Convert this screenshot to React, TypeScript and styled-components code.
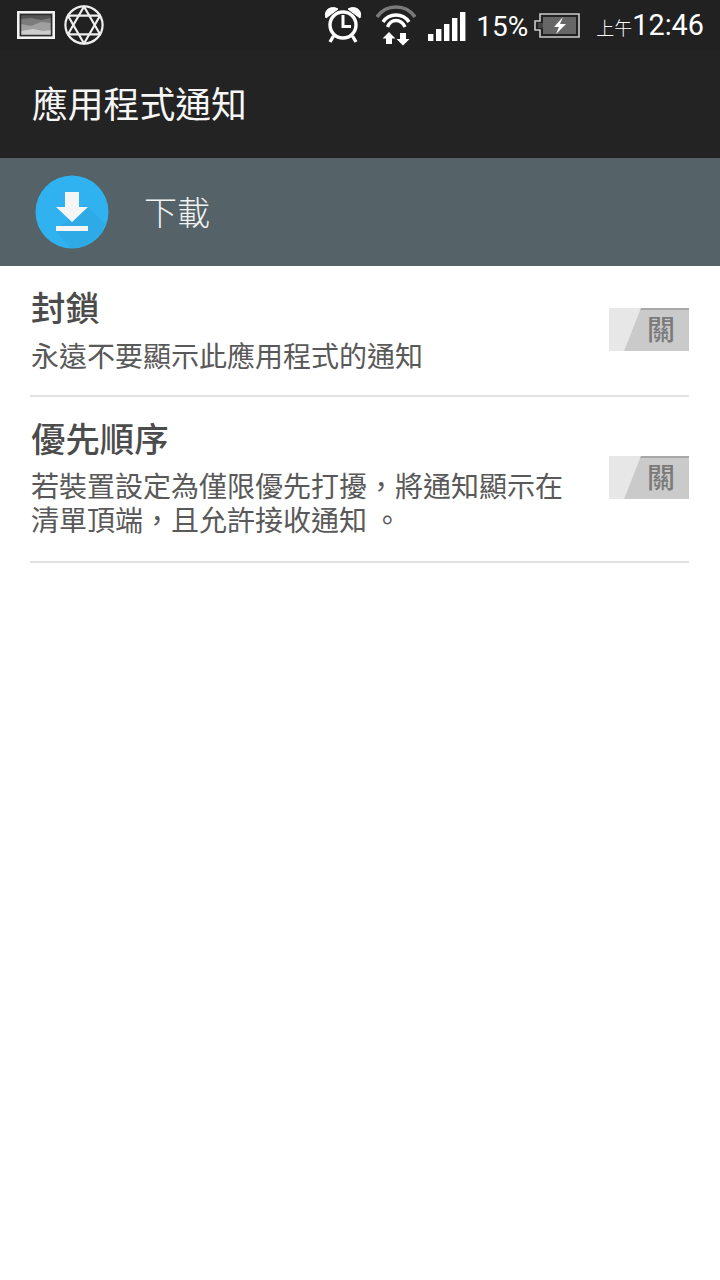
import React from 'react'
import styled, { createGlobalStyle } from 'styled-components'

const GlobalStyle = createGlobalStyle`
  html, body {
    margin: 0;
    padding: 0;
    background: #fff;
  }
  body {
    font-family: 'Noto Sans CJK TC', 'Noto Sans', sans-serif;
  }
`

const Page = styled.div`
  width: 720px;
  height: 1280px;
  overflow: hidden;
  background: #fff;
`

const StatusBar = styled.div`
  height: 50px;
  background: #212121;
  display: flex;
  align-items: center;
  padding: 0 16px 0 17px;
  box-sizing: border-box;
  color: #fff;
`

const StatusLeft = styled.div`
  display: flex;
  align-items: center;
  gap: 9px;
  flex: 1;
`

const StatusRight = styled.div`
  display: flex;
  align-items: center;
`

const Percent = styled.span`
  font-family: Roboto, sans-serif;
  font-size: 28px;
  font-weight: 400;
  margin: 2px 6px 0 10px;
`

const ClockPrefix = styled.span`
  font-size: 18px;
  font-weight: 300;
  margin: 4px 0 0 16px;
`

const Clock = styled.span`
  font-family: Roboto, sans-serif;
  font-size: 28.8px;
  font-weight: 400;
`

const AppBar = styled.div`
  height: 108px;
  background: #232323;
  display: flex;
  align-items: center;
  padding: 0 0 4px 32px;
  box-sizing: border-box;
  color: #f6f6f6;
  font-size: 35.8px;
  font-weight: 400;
`

const AppHeader = styled.div`
  height: 108px;
  background: #556368;
  display: flex;
  align-items: center;
  padding-left: 35px;
  gap: 35px;
  color: #f2f4f4;
  font-size: 33px;
  font-weight: 300;
`

const HeaderLabel = styled.span`
  margin-bottom: 2px;
`

const List = styled.div`
  padding: 0 31px 0 30px;
`

const Row = styled.div<{ $height: number }>`
  height: ${({ $height }) => $height}px;
  box-sizing: border-box;
  border-bottom: 2px solid #e2e2e2;
  display: flex;
  justify-content: space-between;
  align-items: flex-start;
`

const RowText = styled.div`
  width: 540px;
  padding: 16px 0 0 1px;
`

const RowTitle = styled.div`
  color: #4c4c4c;
  font-size: 34.4px;
  font-weight: 500;
  line-height: 48px;
`

const RowDesc = styled.div<{ $gap: number }>`
  color: #595959;
  font-size: 28px;
  line-height: 34px;
  margin-top: ${({ $gap }) => $gap}px;
`

const Toggle = styled.div<{ $top: number }>`
  position: relative;
  width: 80px;
  height: 43px;
  margin-top: ${({ $top }) => $top}px;
  padding: 0 14px 6px 0;
  box-sizing: border-box;
  background: #cacaca;
  border-top: 2px solid #a8a8a8;
  display: flex;
  align-items: center;
  justify-content: flex-end;
  color: #7a7a7a;
  font-size: 28px;
  font-weight: 500;

  &::before {
    content: '';
    position: absolute;
    inset: -2px auto 0 0;
    width: 32px;
    background: #e7e7e7;
    clip-path: polygon(0 0, 100% 0, 47% 100%, 0 100%);
  }
`

const PictureIcon = () => (
  <svg width="38" height="28" viewBox="0 0 38 28">
    <rect x="1" y="1" width="36" height="26" fill="#c8c8c8" stroke="#f2f2f2" strokeWidth="2" />
    <rect x="3.5" y="3.5" width="31" height="21" fill="#555" />
    <path d="M4 8 L14 7 L24 9 L34 7 V24 H4 Z" fill="#7c7c7c" />
    <path d="M4 13 L14 15 L24 11 L34 12 V24 H4 Z" fill="#a0a0a0" />
    <path d="M4 20 L16 18 L26 20 L34 19 V24 H4 Z" fill="#cdcdcd" />
    <rect x="3.5" y="3.5" width="31" height="21" fill="none" stroke="#2c2c2c" strokeWidth="1.5" />
  </svg>
)

const StarIcon = () => (
  <svg width="40" height="40" viewBox="0 0 40 40" fill="none" stroke="#eee" strokeWidth="2.2">
    <circle cx="20" cy="20" r="18.6" />
    <path d="M20 1.5 L36 29.3 H4 Z" strokeLinejoin="round" />
    <path d="M20 38.5 L4 10.7 H36 Z" strokeLinejoin="round" />
  </svg>
)

const AlarmIcon = () => (
  <svg width="40" height="40" viewBox="0 0 40 40" fill="none" stroke="#fff" style={{ marginRight: 13 }}>
    <circle cx="20" cy="20" r="13" strokeWidth="3.4" />
    <path d="M20 10 V21.5 H28" strokeWidth="3" />
    <path d="M3 13 C0 5 8 0 15 4 Z" fill="#fff" strokeWidth="1" />
    <path d="M37 13 C40 5 32 0 25 4 Z" fill="#fff" strokeWidth="1" />
    <path d="M10.5 31 L7 37 M29.5 31 L33 37" strokeWidth="3.4" />
  </svg>
)

const WifiIcon = () => (
  <svg width="40" height="42" viewBox="0 0 40 42" fill="none" style={{ marginRight: 12 }}>
    <path d="M1 13 C10 -0.3 30 -0.3 39 13" stroke="#7a7a7a" strokeWidth="3.6" />
    <path d="M7 18 C13 8.7 27 8.7 33 18" stroke="#fff" strokeWidth="3.4" />
    <path d="M11.5 23 C15 14.3 25 14.3 29 23" stroke="#fff" strokeWidth="3.4" />
    <path d="M10 40 V34.5 H6.5 L13 28 L19.5 34.5 H16 V40 Z" fill="#fff" />
    <path d="M24 29 V35 H20.5 L27 41.5 L33.5 35 H30 V29 Z" fill="#fff" />
  </svg>
)

const SignalIcon = () => (
  <svg width="38" height="32" viewBox="0 0 38 32" fill="#fff">
    <rect x="0" y="25" width="5.4" height="7" />
    <rect x="8" y="20" width="5.4" height="12" />
    <rect x="16" y="15" width="5.4" height="17" />
    <rect x="24" y="9" width="5.4" height="23" />
    <rect x="32" y="3" width="5.4" height="29" />
  </svg>
)

const BatteryIcon = () => (
  <svg width="46" height="26" viewBox="0 0 46 26" fill="none">
    <path d="M6 2 H45 V25 H6 V18 H1 V9 H6 Z" stroke="#ccc" strokeWidth="1.6" fill="#222" />
    <rect x="9" y="5" width="33" height="17" fill="#666" />
    <rect x="4" y="11" width="5" height="5" fill="#444" />
    <path d="M29 5 L20 15 H25 L22 22 L32 12 H26 Z" fill="#fff" />
  </svg>
)

const DownloadIcon = () => (
  <svg width="74" height="74" viewBox="0 0 74 74">
    <circle cx="37" cy="37" r="36.5" fill="#2fb2ef" />
    <path d="M50 29 L70 50 A36.5 36.5 0 0 1 36 73 L21 56 Z" fill="#2eaae6" />
    <path d="M30 17 H44 V32 H53 L37 47 L21 32 H30 Z" fill="#f5f5f5" />
    <rect x="21" y="51" width="32" height="5" fill="#f5f5f5" />
  </svg>
)

const App = () => (
  <Page>
    <GlobalStyle />
    <StatusBar>
      <StatusLeft>
        <PictureIcon />
        <StarIcon />
      </StatusLeft>
      <StatusRight>
        <AlarmIcon />
        <WifiIcon />
        <SignalIcon />
        <Percent>15%</Percent>
        <BatteryIcon />
        <ClockPrefix>上午</ClockPrefix>
        <Clock>12:46</Clock>
      </StatusRight>
    </StatusBar>
    <AppBar>應用程式通知</AppBar>
    <AppHeader>
      <DownloadIcon />
      <HeaderLabel>下載</HeaderLabel>
    </AppHeader>
    <List>
      <Row $height={131}>
        <RowText>
          <RowTitle>封鎖</RowTitle>
          <RowDesc $gap={8}>永遠不要顯示此應用程式的通知</RowDesc>
        </RowText>
        <Toggle $top={42}>關</Toggle>
      </Row>
      <Row $height={166}>
        <RowText>
          <RowTitle>優先順序</RowTitle>
          <RowDesc $gap={7}>若裝置設定為僅限優先打擾，將通知顯示在清單頂端，且允許接收通知 。</RowDesc>
        </RowText>
        <Toggle $top={59}>關</Toggle>
      </Row>
    </List>
  </Page>
)

export default App
